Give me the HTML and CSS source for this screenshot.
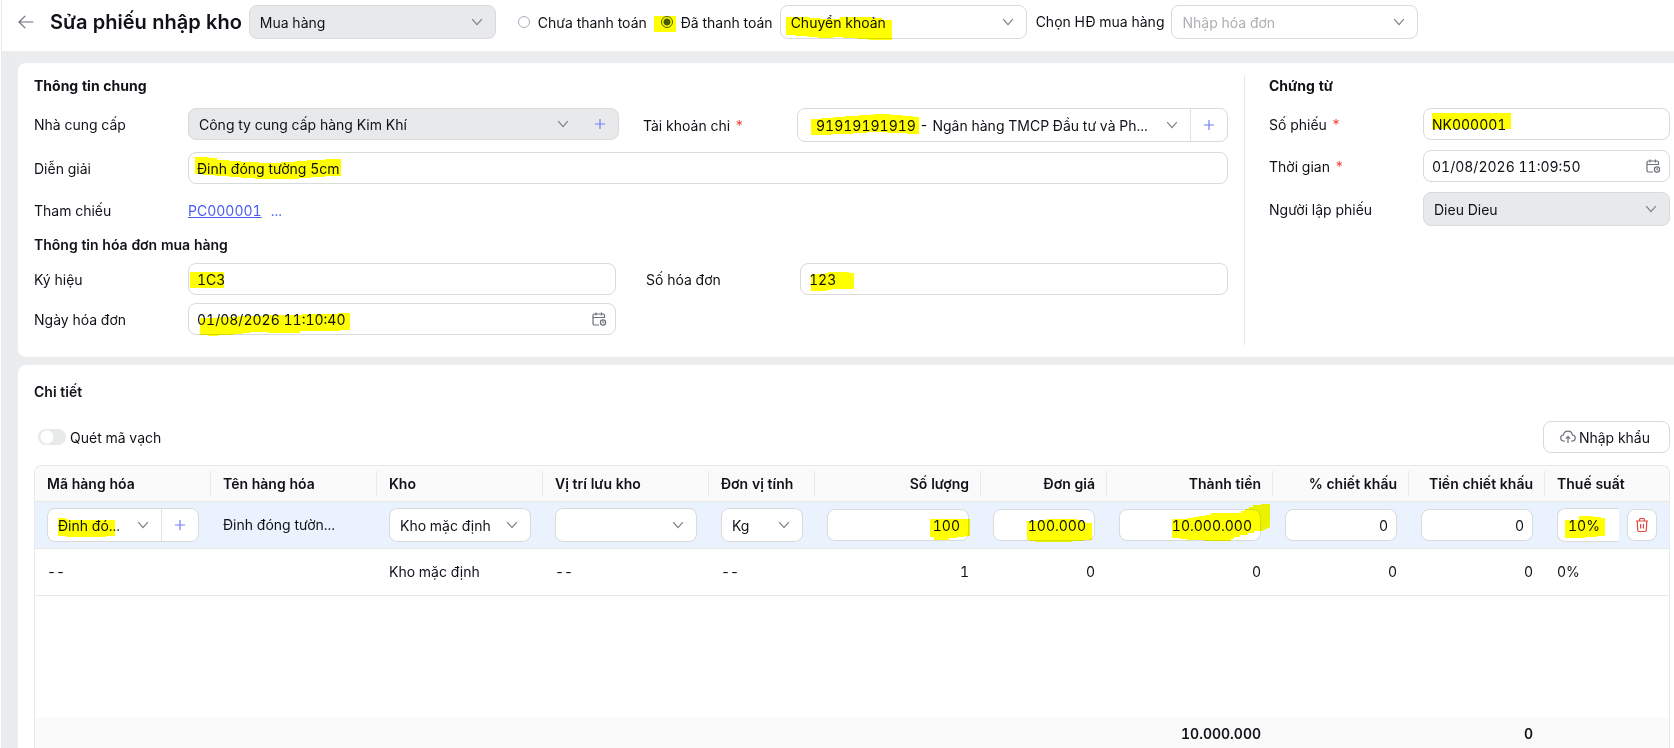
FILE: index.html
```html
<!DOCTYPE html>
<html lang="vi">
    <head>
        <title>Sửa phiếu nhập kho</title>
        <meta charset="UTF-8">
        <meta name="viewport" content="width=device-width">
        <link rel="stylesheet" href="styles.css">
    </head>
    <body>
        <!-- shared icons -->
        <svg class="sprite" aria-hidden="true">
            <symbol id="i-down" viewBox="0 0 12 12"><path d="M1.200 3.200 6 8.600l4.800-5.400"/></symbol>
            <symbol id="i-plus" viewBox="0 0 12 12"><path d="M6 1v10M1 6h10"/></symbol>
            <symbol id="i-back" viewBox="0 0 16 16"><path d="M15.500 8H1M7.200 1.800 1 8l6.200 6.200"/></symbol>
            <symbol id="i-date" viewBox="0 0 16 16"><path d="M13.500 7V4.500A1.500 1.500 0 0 0 12 3H3.500A1.500 1.500 0 0 0 2 4.500v8A1.500 1.500 0 0 0 3.500 14H8M2 6.500h11.500M5 1.500v3M10.500 1.500v3"/><circle cx="12" cy="11.500" r="2.600"/><path d="M12 10.300v1.200l.9.600"/></symbol>
            <symbol id="i-cloud" viewBox="0 0 16 16"><path d="M5 12H4a3 3 0 0 1-.5-6 4.500 4.500 0 0 1 8.900 0A3 3 0 0 1 12 12h-1M8 14V7.500M5.800 9.700 8 7.500l2.200 2.200"/></symbol>
            <symbol id="i-trash" viewBox="0 0 14 16"><path d="M1 4h12M4.500 4V2.500c0-.6.4-1 1-1h3c.6 0 1 .4 1 1V4M2.200 4l.5 9c0 .9.6 1.500 1.500 1.500h5.600c.9 0 1.500-.6 1.500-1.500l.5-9M5.600 7v4.500M8.400 7v4.500"/></symbol>
        </svg>

        <form class="page" action="">
            <header class="topbar">
                <button type="button" class="back" aria-label="Quay lại"><svg><use href="#i-back"/></svg></button>
                <h1>Sửa phiếu nhập kho</h1>
                <div class="select wide off">
                    <select aria-label="Loại phiếu" disabled><option>Mua hàng</option></select>
                    <svg class="down"><use href="#i-down"/></svg>
                </div>
                <div class="radios">
                    <label class="radio"><input type="radio" name="pay" value="0"><span>Chưa thanh toán</span></label>
                    <label class="radio"><input type="radio" name="pay" value="1" checked><span>Đã thanh toán</span>
                        <svg class="mark mark-radio" viewBox="0 0 22 16"><path d="M0 0h22v16H0z"/></svg>
                    </label>
                </div>
                <div class="select wide method">
                    <select aria-label="Hình thức thanh toán"><option>Chuyển khoản</option></select>
                    <svg class="down"><use href="#i-down"/></svg>
                    <svg class="mark mark-method" viewBox="0 0 106 23"><path d="M0 0h24v1h10v1h20V0h32v1h10v2h10v20H82v-1H72v-1H57v-1H47v1H32v-1H22v-1H10v-1H0z"/></svg>
                </div>
                <label for="hd">Chọn HĐ mua hàng</label>
                <div class="select wide empty">
                    <select id="hd"><option>Nhập hóa đơn</option></select>
                    <svg class="down"><use href="#i-down"/></svg>
                </div>
            </header>

            <main>
                <section class="card info">
                    <div class="general">
                        <h2 class="head">Thông tin chung</h2>
                        <div class="pair">
                            <div class="field">
                                <label for="supplier">Nhà cung cấp</label>
                                <div class="combo off">
                                    <div class="select">
                                        <select id="supplier" disabled><option>Công ty cung cấp hàng Kim Khí</option></select>
                                        <svg class="down"><use href="#i-down"/></svg>
                                    </div>
                                    <button type="button" class="add" aria-label="Thêm nhà cung cấp" disabled><svg><use href="#i-plus"/></svg></button>
                                </div>
                            </div>
                            <div class="field">
                                <label for="account">Tài khoản chi <b>*</b></label>
                                <div class="combo account">
                                    <div class="select">
                                        <select id="account"><option>91919191919 - Ngân hàng TMCP Đầu tư và Ph...</option></select>
                                        <svg class="down"><use href="#i-down"/></svg>
                                    </div>
                                    <button type="button" class="add" aria-label="Thêm tài khoản"><svg><use href="#i-plus"/></svg></button>
                                    <svg class="mark mark-account" viewBox="0 0 108 21"><path d="M0 5h10V4h12V3h12V2h14V1h14V0h18v1h12v1h10v1h6v17h-12v-1H76v-1H56v1H42v1H20v1H0z"/></svg>
                                </div>
                            </div>
                        </div>
                        <div class="field">
                            <label for="note">Diễn giải</label>
                            <div class="box">
                                <input id="note" type="text" value="Đinh đóng tường 5cm">
                                <svg class="mark mark-note" viewBox="0 0 146 23"><path d="M0 0h14v1h8v2h12v1h12v1h18v1h22V5h14V4h12V3h18V2h28v17h-28v1h-14v1h-12v1H60v-1H46v-1H34v-1H20v-1H8v-1H0z"/></svg>
                            </div>
                        </div>
                        <div class="field refs">
                            <span>Tham chiếu</span>
                            <div><a href="#">PC000001</a><a href="#" class="more">...</a></div>
                        </div>
                        <h2>Thông tin hóa đơn mua hàng</h2>
                        <div class="pair invoice">
                            <div class="field">
                                <label for="sign">Ký hiệu</label>
                                <div class="box">
                                    <input id="sign" type="text" value="1C3">
                                    <svg class="mark mark-sign" viewBox="0 0 34 16"><path d="M0 0h34v16H0z"/></svg>
                                </div>
                            </div>
                            <div class="field">
                                <label for="number">Số hóa đơn</label>
                                <div class="box">
                                    <input id="number" type="text" value="123">
                                    <svg class="mark mark-number" viewBox="0 0 43 19"><path d="M0 2h14V1h3V0h21v1h5v16H20v1h-4v1H0z"/></svg>
                                </div>
                            </div>
                            <div class="field">
                                <label for="invdate">Ngày hóa đơn</label>
                                <div class="box">
                                    <input id="invdate" type="text" value="01/08/2026 11:10:40">
                                    <svg class="date"><use href="#i-date"/></svg>
                                    <svg class="mark mark-invdate" viewBox="0 0 150 23"><path d="M0 5h18V4h20V3h26V2h38V1h36V0h12v17h-10v1h-40v2H68v-1H50v1H42v1H34v1H18v1H8v-1H0z"/></svg>
                                </div>
                            </div>
                        </div>
                    </div>
                    <div class="voucher">
                        <h2 class="head">Chứng từ</h2>
                        <div class="field">
                            <label for="code">Số phiếu <b>*</b></label>
                            <div class="box">
                                <input id="code" type="text" value="NK000001">
                                <svg class="mark mark-code" viewBox="0 0 79 16"><path d="M0 0h79v16H0z"/></svg>
                            </div>
                        </div>
                        <div class="field">
                            <label for="time">Thời gian <b>*</b></label>
                            <div class="box">
                                <input id="time" type="text" value="01/08/2026 11:09:50">
                                <svg class="date"><use href="#i-date"/></svg>
                            </div>
                        </div>
                        <div class="field">
                            <label for="author">Người lập phiếu</label>
                            <div class="select off">
                                <select id="author" disabled><option>Dieu Dieu</option></select>
                                <svg class="down"><use href="#i-down"/></svg>
                            </div>
                        </div>
                    </div>
                </section>

                <section class="card detail">
                    <h2>Chi tiết</h2>
                    <div class="tools">
                        <label class="switch"><input type="checkbox"><span>Quét mã vạch</span></label>
                        <button type="button" class="import"><svg><use href="#i-cloud"/></svg><span>Nhập khẩu</span></button>
                    </div>
                    <div class="grid">
                        <table>
                            <colgroup>
                                <col class="c-code"><col class="c-name"><col class="c-name"><col class="c-name"><col class="c-unit"><col class="c-name">
                                <col class="c-price"><col class="c-name"><col class="c-disc"><col class="c-disc"><col><col class="c-del">
                            </colgroup>
                            <thead>
                                <tr>
                                    <th>Mã hàng hóa</th>
                                    <th>Tên hàng hóa</th>
                                    <th>Kho</th>
                                    <th>Vị trí lưu kho</th>
                                    <th>Đơn vị tính</th>
                                    <th class="num">Số lượng</th>
                                    <th class="num">Đơn giá</th>
                                    <th class="num">Thành tiền</th>
                                    <th class="num">% chiết khấu</th>
                                    <th class="num">Tiền chiết khấu</th>
                                    <th>Thuế suất</th>
                                    <th></th>
                                </tr>
                            </thead>
                            <tbody>
                                <tr class="active">
                                    <td>
                                        <div class="combo">
                                            <div class="select">
                                                <select aria-label="Mã hàng hóa"><option>Đinh đó...</option></select>
                                                <svg class="down"><use href="#i-down"/></svg>
                                            </div>
                                            <button type="button" class="add" aria-label="Thêm hàng hóa"><svg><use href="#i-plus"/></svg></button>
                                            <svg class="mark mark-item" viewBox="0 0 57 19"><path d="M0 0h7v1h3v1h47v16h-9v1H8v-1H0z"/></svg>
                                        </div>
                                    </td>
                                    <td>Đinh đóng tườn...</td>
                                    <td>
                                        <div class="select">
                                            <select aria-label="Kho"><option>Kho mặc định</option></select>
                                            <svg class="down"><use href="#i-down"/></svg>
                                        </div>
                                    </td>
                                    <td>
                                        <div class="select">
                                            <select aria-label="Vị trí lưu kho"><option></option></select>
                                            <svg class="down"><use href="#i-down"/></svg>
                                        </div>
                                    </td>
                                    <td>
                                        <div class="select">
                                            <select aria-label="Đơn vị tính"><option>Kg</option></select>
                                            <svg class="down"><use href="#i-down"/></svg>
                                        </div>
                                    </td>
                                    <td class="num">
                                        <div class="box">
                                            <input type="text" aria-label="Số lượng" value="100">
                                            <svg class="mark mark-qty" viewBox="0 0 40 21"><path d="M0 0h40v17h-5v1h-8v1h-8v2H4v-3H0z"/></svg>
                                        </div>
                                    </td>
                                    <td class="num">
                                        <div class="box">
                                            <input type="text" aria-label="Đơn giá" value="100.000">
                                            <svg class="mark mark-price" viewBox="0 0 65 24"><path d="M0 2h12V1h8V0h30v1h4v2h5v1h6v17h-8v1H45v1H8v-1H3v-1H0z"/></svg>
                                        </div>
                                    </td>
                                    <td class="num">
                                        <div class="box">
                                            <input type="text" aria-label="Thành tiền" value="10.000.000">
                                            <svg class="mark mark-total" viewBox="0 0 98 38"><path d="M0 15h15v-1h6v-1h6v-1h6v-1h6V9h30V7h4V5h4V3h4V1h8V0h9v23l-8 4H82v2h-6v2h-8v2h-6v2h-3v2H32v-1H15v-1H8v-1H0z"/></svg>
                                        </div>
                                    </td>
                                    <td class="num"><div class="box"><input type="text" aria-label="% chiết khấu" value="0"></div></td>
                                    <td class="num"><div class="box"><input type="text" aria-label="Tiền chiết khấu" value="0"></div></td>
                                    <td class="tax">
                                        <div class="select">
                                            <select aria-label="Thuế suất"><option>10%</option></select>
                                            <svg class="mark mark-tax" viewBox="0 0 40 22"><path d="M0 4h14V0h14v1h8v1h4v18h-8v1H20v1H0z"/></svg>
                                        </div>
                                    </td>
                                    <td class="del"><button type="button" aria-label="Xóa dòng"><svg><use href="#i-trash"/></svg></button></td>
                                </tr>
                                <tr>
                                    <td>--</td>
                                    <td></td>
                                    <td>Kho mặc định</td>
                                    <td>--</td>
                                    <td>--</td>
                                    <td class="num">1</td>
                                    <td class="num">0</td>
                                    <td class="num">0</td>
                                    <td class="num">0</td>
                                    <td class="num">0</td>
                                    <td>0%</td>
                                    <td></td>
                                </tr>
                                <tr class="blank"><td colspan="12"></td></tr>
                            </tbody>
                            <tfoot>
                                <tr>
                                    <td colspan="7"></td>
                                    <td class="num">10.000.000</td>
                                    <td></td>
                                    <td class="num">0</td>
                                    <td colspan="2"></td>
                                </tr>
                            </tfoot>
                        </table>
                    </div>
                </section>
            </main>
        </form>
    </body>
</html>
```
FILE: styles.css
```css
*{
    box-sizing: border-box;
}
body{
    margin: 0;
    overflow: hidden;
    font-family: Inter, "Liberation Sans", sans-serif;
    font-size: 14px;
    line-height: 22px;
    font-variant-numeric: tabular-nums;
    color: #101218;
    background-color: #fff;
}
input, select, button{
    font: inherit;
    font-variant-numeric: tabular-nums;
    color: inherit;
    margin: 0;
}
svg{
    display: block;
    fill: none;
    stroke: currentColor;
    stroke-width: 1.2;
}
h1, h2{
    margin: 0;
    font-weight: 600;
}
h1{
    font-size: 20px;
    line-height: 28px;
    white-space: nowrap;
}
h2{
    font-size: 14px;
}
.head{
    font-weight: 700;
}
.sprite{
    position: absolute;
    width: 0;
    height: 0;
}
.page{
    height: 100vh;
    display: flex;
    flex-direction: column;
    border-left: 1px solid #e8e9eb;
    margin-left: 1px;
}

/* top bar */
.topbar{
    display: flex;
    align-items: center;
    height: 51px;
    padding: 0 16px 8px;
    flex: none;
}
.back{
    border: 0;
    padding: 0;
    background: none;
    color: #6b6f7b;
    margin-right: 16px;
}
.back svg{
    width: 16px;
    height: 16px;
}
.topbar .wide{
    width: 247px;
    margin-left: 7px;
}
.radios{
    display: flex;
    gap: 14px;
    margin-left: 22px;
}
.radio{
    position: relative;
    display: flex;
    align-items: center;
    gap: 8px;
}
.radio input{
    appearance: none;
    width: 12px;
    height: 12px;
    border: 1px solid #a9aebb;
    border-radius: 50%;
}
.radio input:checked{
    border-color: #4b5cf0;
    background: radial-gradient(#4b5cf0 3px, #fff 4px);
}
.method{
    margin-right: 9px;
}
.radio span, .switch span, .import span, .field label{
    padding-top: 2px;
}

/* fields */
.select{
    position: relative;
    display: grid;
    align-items: center;
    height: 34px;
    min-width: 0;
    border: 1px solid #d9dadc;
    border-radius: 8px;
    background-color: #fff;
}
.select select{
    grid-area: 1 / 1;
    appearance: none;
    width: 100%;
    height: 32px;
    border: 0;
    padding: 2px 30px 0 10px;
    background: none;
    opacity: 1;
    outline: none;
}
.select .down{
    grid-area: 1 / 1;
    justify-self: end;
    width: 12px;
    height: 12px;
    margin-right: 12px;
    color: #7b7e88;
    pointer-events: none;
}
.off, .select.off{
    background-color: #e8e9eb;
}
.empty select{
    color: #adafb3;
}
.combo{
    position: relative;
    display: flex;
    height: 34px;
    border: 1px solid #d9dadc;
    border-radius: 8px;
    background-color: #fff;
}
.combo .select{
    flex: 1;
    height: 32px;
    border: 0;
    background: none;
}
.add{
    flex: none;
    display: grid;
    place-items: center;
    width: 37px;
    padding: 0;
    border: 0;
    border-left: 1px solid #e2e3e6;
    background: none;
    color: #6f80f5;
}
.add svg{
    width: 12px;
    height: 12px;
}
.combo.off{
    height: 32px;
    background-color: #e8e9eb;
}
.combo.off .select, .combo.off select{
    height: 30px;
}
.combo.off .add{
    border-left-color: transparent;
}
.account select{
    padding-left: 18px;
}
.box{
    position: relative;
    display: flex;
    align-items: center;
    height: 32px;
    border: 1px solid #d9dadc;
    border-radius: 8px;
    background-color: #fff;
}
.box input{
    flex: 1;
    min-width: 0;
    height: 30px;
    border: 0;
    padding: 0 8px;
    background: none;
    outline: none;
}
.date{
    flex: none;
    width: 16px;
    height: 16px;
    margin-right: 8px;
    color: #6b6f7b;
}

/* cards */
main{
    flex: 1;
    display: flex;
    flex-direction: column;
    gap: 8px;
    min-height: 0;
    padding: 12px 0 0 16px;
    overflow: hidden;
    background-color: #ebecee;
}
.card{
    flex: none;
    background-color: #fff;
    border-radius: 8px 0 0 8px;
    padding: 12px 4px 12px 16px;
}
.info{
    display: flex;
}
.general{
    flex: 1;
    min-width: 0;
    padding: 0 16px 10px 0;
    border-right: 1px solid #e8e9eb;
}
.voucher{
    flex: 0 0 425px;
    padding-left: 24px;
}
.voucher .field{
    margin-bottom: 10px;
}
.head{
    margin-bottom: 11px;
}
.pair{
    display: grid;
    grid-template-columns: 1fr 1fr;
    gap: 10px 24px;
    align-items: start;
    margin-bottom: 10px;
}
.field{
    display: grid;
    grid-template-columns: 154px minmax(0, 1fr);
    align-items: center;
}
.field b{
    margin-left: 1px;
    font-weight: 400;
    color: #f04438;
}
.refs{
    margin: 16px 0 12px;
}
.refs + h2{
    margin-bottom: 7px;
}
.invoice{
    gap: 8px 30px;
    margin-bottom: 0;
}
a{
    color: #4b5cf0;
}
.more{
    margin-left: 9px;
    text-decoration: none;
}

/* detail table */
.detail{
    flex: 1 0 auto;
    padding-top: 16px;
}
.tools{
    display: flex;
    justify-content: space-between;
    align-items: center;
    margin: 18px 0 12px;
}
.switch{
    display: flex;
    align-items: center;
    gap: 4px;
    padding-left: 4px;
}
.switch input{
    appearance: none;
    width: 28px;
    height: 16px;
    border-radius: 8px;
    background: radial-gradient(circle at 9px 8px, #fff 6px, #e8e9eb 7px);
}
.import{
    display: flex;
    align-items: center;
    gap: 3px;
    height: 32px;
    padding: 0 19px 0 16px;
    border: 1px solid #d9dadc;
    border-radius: 8px;
    background-color: #fff;
}
.import svg{
    width: 16px;
    height: 16px;
    color: #6b6f7b;
}
.grid{
    border: 1px solid #e8e9eb;
    border-bottom: 0;
    border-radius: 8px 8px 0 0;
    overflow: hidden;
}
table{
    width: 100%;
    table-layout: fixed;
    border-collapse: separate;
    border-spacing: 0;
}
.c-code{
    width: 176px;
}
.c-name{
    width: 166px;
}
.c-unit{
    width: 106px;
}
.c-price{
    width: 126px;
}
.c-disc{
    width: 136px;
}
.c-del{
    width: 50px;
}
th, td{
    height: 47px;
    padding: 0 12px;
    border-bottom: 1px solid #e8e9eb;
    text-align: left;
    white-space: nowrap;
}
th{
    height: 36px;
    font-weight: 600;
    background: linear-gradient(#e8e9eb, #e8e9eb) right center / 1px 25px no-repeat;
}
th:nth-last-child(-n+2){
    background: none;
}
thead, tfoot{
    background-color: #fafafa;
}
.num, .num input{
    text-align: right;
}
.active{
    background-color: #eaf2fe;
}
.tax{
    padding-right: 0;
}
.tax .select{
    border-right: 0;
    border-radius: 8px 0 0 8px;
}
.tax select{
    padding-right: 0;
}
.del{
    padding: 0 8px;
}
.del button{
    display: grid;
    place-items: center;
    width: 30px;
    height: 32px;
    padding: 0;
    border: 1px solid #d9dadc;
    border-radius: 8px;
    background-color: #fff;
    color: #e5453d;
}
.del svg{
    width: 14px;
    height: 16px;
}
.blank td{
    height: 122px;
    border-bottom: 0;
}
tfoot td{
    height: 32px;
    border-bottom: 0;
    font-weight: 600;
}

/* yellow highlighter strokes laid over the values */
.mark{
    position: absolute;
    fill: #ff0;
    stroke: none;
    mix-blend-mode: multiply;
    pointer-events: none;
}
.mark-radio{
    left: -7px;
    top: 6px;
    width: 22px;
}
.mark-method{
    left: 5px;
    top: 11px;
    width: 106px;
}
.mark-account{
    left: 13px;
    top: 5px;
    width: 108px;
}
.mark-note{
    left: 6px;
    top: 4px;
    width: 146px;
}
.mark-sign{
    left: 1px;
    top: 8px;
    width: 34px;
}
.mark-number{
    left: 10px;
    top: 8px;
    width: 43px;
}
.mark-invdate{
    left: 11px;
    top: 9px;
    width: 150px;
}
.mark-code{
    left: 8px;
    top: 4px;
    width: 79px;
}
.mark-item{
    left: 10px;
    top: 9px;
    width: 57px;
}
.mark-qty{
    right: -2px;
    top: 9px;
    width: 40px;
}
.mark-price{
    right: 2px;
    top: 9px;
    width: 65px;
}
.mark-total{
    right: -10px;
    top: -6px;
    width: 98px;
}
.mark-tax{
    left: 7px;
    top: 7px;
    width: 40px;
}
```
